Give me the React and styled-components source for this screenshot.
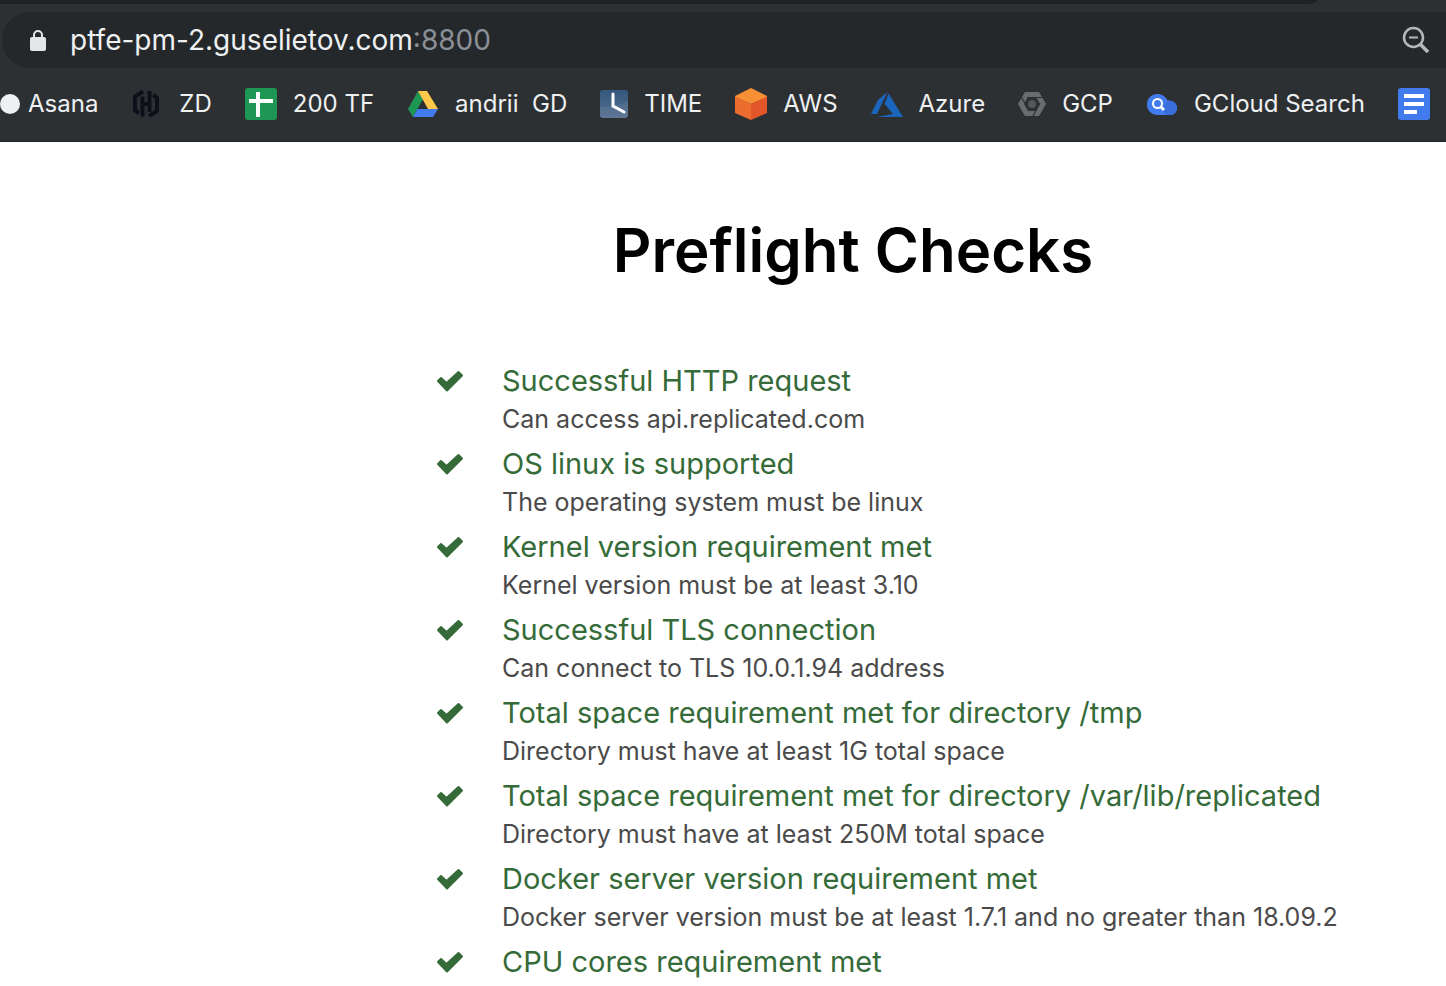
import React from "react";
import styled, { createGlobalStyle } from "styled-components";

const GlobalStyle = createGlobalStyle`
  * { box-sizing: border-box; }
  body {
    margin: 0;
    background: #fff;
    font-family: Inter, "Liberation Sans", sans-serif;
    overflow-x: hidden;
  }
`;

const Browser = styled.div`
  display: flex;
  flex-direction: column;
  height: 100vh;
  overflow: hidden;
`;

const Chrome = styled.header`
  flex: none;
  background: #2d3033;
  border-bottom: 1px solid #202124;
`;

const TabStrip = styled.div`
  height: 4px;
  margin-right: 128px;
  background: #1f2024;
  border-bottom-right-radius: 12px 4px;
`;

const AddressBar = styled.div`
  display: flex;
  align-items: center;
  height: 56px;
  margin: 8px 0 0 2px;
  padding: 0 16px 0 28px;
  background: #24282a;
  border-radius: 28px 0 0 28px;
  font-size: 28px;
  line-height: 34px;
`;

const Host = styled.input`
  field-sizing: content;
  margin-left: 24px;
  padding: 0;
  border: 0;
  outline: 0;
  background: transparent;
  color: #eef0f2;
  font: inherit;
`;

const Port = styled.span`
  flex: 1;
  color: #8b9097;
`;

const ZoomButton = styled.button`
  display: flex;
  padding: 0;
  border: 0;
  background: transparent;
`;

const Bookmarks = styled.nav`
  display: flex;
  align-items: center;
  gap: 33px;
  height: 73px;
  padding-bottom: 1px;
  overflow: hidden;
`;

const Bookmark = styled.a`
  display: flex;
  flex: none;
  align-items: center;
  gap: ${(p) => (p.$tight ? 8 : 16)}px;
  color: #eef0f2;
  font-size: 24px;
  line-height: 32px;
  white-space: pre;
  text-decoration: none;
`;

const Dot = styled.span`
  width: 20px;
  height: 20px;
  border-radius: 50%;
  background: #eef0f3;
`;

const Page = styled.main`
  flex: 1;
  min-height: 0;
  overflow: hidden;
  padding: 68px 0 0 260px;
`;

const Title = styled.h1`
  margin: 0;
  color: #000;
  font-size: 60px;
  font-weight: 600;
  line-height: 80px;
  text-align: center;
`;

const Checks = styled.ul`
  margin: 71px 0 0;
  padding: 0 0 0 176px;
  list-style: none;
`;

const Check = styled.li`
  display: flex;
  gap: 38px;
  height: 83px;
`;

const CheckName = styled.div`
  color: #356b38;
  font-size: 29px;
  line-height: 40px;
  white-space: nowrap;
`;

const CheckDetail = styled.div`
  color: #4a4a4a;
  font-size: 25px;
  line-height: 36px;
  white-space: nowrap;
`;

const Tick = styled.svg`
  flex: none;
  width: 28px;
  height: 40px;
`;

const Icon = ({ children }) => (
  <svg width="32" height="32" viewBox="0 0 32 32" aria-hidden="true">
    {children}
  </svg>
);

const HashiIcon = () => (
  <Icon>
    <g fill="none" stroke="#0c1018" strokeWidth="4">
      <path d="M12 3.500L4 8.500V22.500L8 25" />
      <path d="M11.500 8.500V28.500M18.500 3V24M11.500 16H18.500" />
      <path d="M22 7L26 9.500V23L18 28" />
    </g>
  </Icon>
);

const SheetIcon = () => (
  <Icon>
    <rect width="32" height="32" rx="3" fill="#1f9754" />
    <path d="M4 11H28V15H15V29H11V15H4ZM11 4H15V11H11Z" fill="#fff" />
  </Icon>
);

const DriveIcon = () => (
  <Icon>
    <path d="M11 3 L1 21 L6 29 L16 11 Z" fill="#1f9754" />
    <path d="M11 3H20L31 21H21Z" fill="#ffca4b" />
    <path d="M10.500 21H31L26 29H6Z" fill="#427bee" />
  </Icon>
);

const ClockIcon = () => (
  <svg width="28" height="28" viewBox="0 0 28 28" aria-hidden="true">
    <defs>
      <linearGradient id="clock" x2="0" y2="1">
        <stop stopColor="#34587e" />
        <stop offset="1" stopColor="#566f90" />
      </linearGradient>
    </defs>
    <rect width="28" height="28" rx="3" fill="url(#clock)" />
    <path d="M0 17Q14 18 28 11V25Q28 28 25 28H3Q0 28 0 25Z" fill="#fff" opacity=".06" />
    <path d="M13 4V16L24 22" fill="none" stroke="#fff" strokeWidth="3" strokeLinecap="round" />
  </svg>
);

const AwsIcon = () => (
  <Icon>
    <path d="M16 0L32 8V9L16 16L0 9V8Z" fill="#f79034" />
    <path d="M0 8.500L16 16V32L0 25Z" fill="#ec6c2d" />
    <path d="M32 8.500L16 16V32L32 25Z" fill="#e2562a" />
  </Icon>
);

const AzureIcon = () => (
  <Icon>
    <path d="M16.500 4L7 12L0 26H6Z" fill="#1b66bd" />
    <path d="M17.500 5.500L32 29H6L22 26L13.500 16Z" fill="#1b66bd" />
  </Icon>
);

const GcpIcon = () => (
  <svg width="28" height="28" viewBox="0 0 28 28" aria-hidden="true">
    <path d="M7 2H21L28 14L21 26H7L0 14ZM10 7L6 14L10 21H18L22 14L18 7Z" fill="#6b6b6b" fillRule="evenodd" />
    <circle cx="14" cy="14" r="4" fill="#545657" />
    <path d="M3.500 7.500L8 15M9 7.500H25M22 13L15 26" stroke="#2d3033" strokeWidth="1.200" />
  </svg>
);

const CloudSearchIcon = () => (
  <svg width="32" height="32" viewBox="0 0 32 32" aria-hidden="true">
    <path d="M12 27C5.500 27 1 22.500 1 16.500C1 10.500 5.500 6 11.500 6C16 6 19.500 8.500 21.500 12.500C26.500 12 31 15 31 20C31 24 28 27 24 27Z" fill="#427bee" />
    <path d="M21.500 12.500L16 20L20 27H24C28 27 31 24 31 20C31 15 26.500 12 21.500 12.500Z" fill="#3a6edb" />
    <circle cx="11.500" cy="15.500" r="4.500" fill="none" stroke="#fff" strokeWidth="2" />
    <path d="M14.500 18.500L18 22" stroke="#fff" strokeWidth="3" />
  </svg>
);

const DocIcon = () => (
  <Icon>
    <rect width="32" height="32" rx="3" fill="#427bee" />
    <path d="M6 6H26V10H6ZM6 14H26V18H6ZM6 22H19V26H6Z" fill="#fff" />
  </Icon>
);

const LockIcon = () => (
  <svg width="16" height="22" viewBox="0 0 16 22" aria-hidden="true">
    <rect y="8" width="16" height="14" rx="2" fill="#e4e6ea" />
    <path d="M4 9V6A4 4 0 0 1 12 6V9" fill="none" stroke="#e4e6ea" strokeWidth="2" />
  </svg>
);

const ZoomOutIcon = () => (
  <svg width="28" height="28" viewBox="0 0 28 28" aria-hidden="true">
    <g fill="none" stroke="#b4b8bc">
      <circle cx="11.500" cy="11.500" r="9.500" strokeWidth="2.500" />
      <path d="M7 11.500H16" strokeWidth="2" />
      <path d="M18.500 18.500L26 26" strokeWidth="3.500" />
    </g>
  </svg>
);

const bookmarks = [
  { label: "Asana", icon: <Dot />, tight: true },
  { label: "ZD", icon: <HashiIcon /> },
  { label: "200 TF", icon: <SheetIcon /> },
  { label: "andrii  GD", icon: <DriveIcon /> },
  { label: "TIME", icon: <ClockIcon /> },
  { label: "AWS", icon: <AwsIcon /> },
  { label: "Azure", icon: <AzureIcon /> },
  { label: "GCP", icon: <GcpIcon /> },
  { label: "GCloud Search", icon: <CloudSearchIcon /> },
  { label: "", icon: <DocIcon /> },
];

const checks = [
  ["Successful HTTP request", "Can access api.replicated.com"],
  ["OS linux is supported", "The operating system must be linux"],
  ["Kernel version requirement met", "Kernel version must be at least 3.10"],
  ["Successful TLS connection", "Can connect to TLS 10.0.1.94 address"],
  ["Total space requirement met for directory /tmp", "Directory must have at least 1G total space"],
  ["Total space requirement met for directory /var/lib/replicated", "Directory must have at least 250M total space"],
  ["Docker server version requirement met", "Docker server version must be at least 1.7.1 and no greater than 18.09.2"],
  ["CPU cores requirement met", ""],
];

export default function App() {
  return (
    <Browser>
      <GlobalStyle />
      <Chrome>
        <TabStrip />
        <AddressBar>
          <LockIcon />
          <Host aria-label="Address" defaultValue="ptfe-pm-2.guselietov.com" />
          <Port>:8800</Port>
          <ZoomButton aria-label="Zoom out">
            <ZoomOutIcon />
          </ZoomButton>
        </AddressBar>
        <Bookmarks aria-label="Bookmarks">
          {bookmarks.map((b) => (
            <Bookmark key={b.label} href="#" $tight={b.tight} aria-label={b.label || "Document"}>
              {b.icon}
              {b.label && <span>{b.label}</span>}
            </Bookmark>
          ))}
        </Bookmarks>
      </Chrome>
      <Page>
        <Title>Preflight Checks</Title>
        <Checks>
          {checks.map(([name, detail]) => (
            <Check key={name}>
              <Tick viewBox="0 0 28 40" aria-hidden="true">
                <path
                  d="M2 20L5 17L10.500 22L22.500 11L26 14.500L11 29.500Z"
                  fill="#356b38"
                  stroke="#356b38"
                  strokeWidth="2"
                  strokeLinejoin="round"
                />
              </Tick>
              <div>
                <CheckName>{name}</CheckName>
                {detail && <CheckDetail>{detail}</CheckDetail>}
              </div>
            </Check>
          ))}
        </Checks>
      </Page>
    </Browser>
  );
}
